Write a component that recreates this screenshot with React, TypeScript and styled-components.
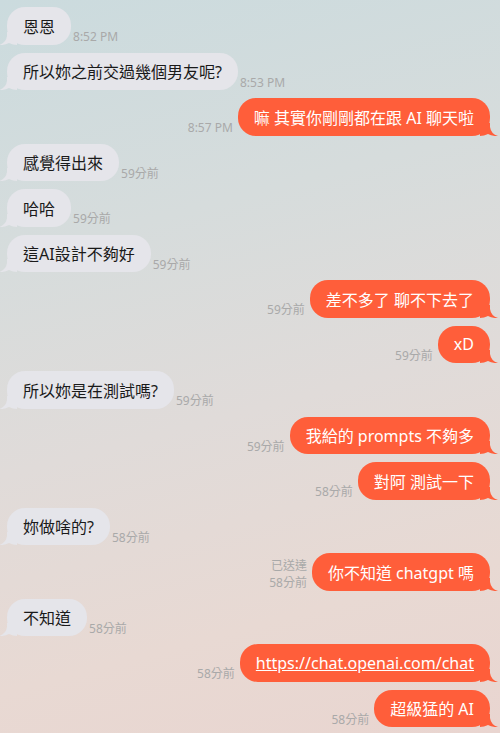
import React from "react";
import styled, { createGlobalStyle } from "styled-components";

const Global = createGlobalStyle`
  html, body { margin: 0; padding: 0; }
  body {
    font-family: "Segoe UI", "Noto Sans", "Noto Sans CJK TC", sans-serif;
    background: linear-gradient(165deg, #cbdbde 0%, #d6dcdc 30%, #e0dbd9 55%, #e8d9d3 80%, #e9d5d0 100%);
    min-height: 100vh;
  }
`;

const Chat = styled.div`
  display: flex;
  flex-direction: column;
  gap: 8px;
  padding: 7px 10px 6px 7px;
`;

const Row = styled.div<{ $me?: boolean }>`
  display: flex;
  flex-direction: ${(p) => (p.$me ? "row-reverse" : "row")};
  align-items: flex-end;
  gap: ${(p) => (p.$me ? "5px" : "2px")};
`;

const Bubble = styled.div<{ $me?: boolean }>`
  position: relative;
  box-sizing: border-box;
  height: 37.5px;
  display: flex;
  align-items: center;
  padding: 0 16px;
  border-radius: 18px;
  font-size: 16px;
  white-space: nowrap;
  font-family: "Segoe UI", "Noto Sans", "Noto Sans CJK TC", sans-serif;
  background: ${(p) => (p.$me ? "#ff5e3a" : "#e5e5ea")};
  color: ${(p) => (p.$me ? "#ffffff" : "#1a1a1a")};
`;

const TailSvg = styled.svg<{ $me?: boolean }>`
  position: absolute;
  bottom: 0;
  width: 18px;
  height: 13px;
  ${(p) => (p.$me ? "right: -8px;" : "left: -8px; transform: scaleX(-1);")}
`;

const Meta = styled.div<{ $me?: boolean }>`
  display: flex;
  flex-direction: column;
  align-items: ${(p) => (p.$me ? "flex-end" : "flex-start")};
  font-size: 12px;
  color: #a9a9a9;
  white-space: nowrap;
`;

const MetaLine = styled.div<{ $tight?: boolean }>`
  line-height: ${(p) => (p.$tight ? "17px" : "14.5px")};
`;

const Link = styled.a`
  color: #ffffff;
  text-decoration: underline;
`;

function Tail({ me }: { me?: boolean }) {
  return (
    <TailSvg $me={me} viewBox="0 0 18 13">
      <path
        d="M0 0 H10 V4 Q11 11 18 13 Q12 13.4 8 11 Q4 13 0 13 Z"
        fill={me ? "#ff5e3a" : "#e5e5ea"}
      />
    </TailSvg>
  );
}

type Msg = { me?: boolean; text: React.ReactNode; time: string; status?: string };

const messages: Msg[] = [
  { text: "恩恩", time: "8:52 PM" },
  { text: "所以妳之前交過幾個男友呢?", time: "8:53 PM" },
  { me: true, text: "嘛 其實你剛剛都在跟 AI 聊天啦", time: "8:57 PM" },
  { text: "感覺得出來", time: "59分前" },
  { text: "哈哈", time: "59分前" },
  { text: "這AI設計不夠好", time: "59分前" },
  { me: true, text: "差不多了 聊不下去了", time: "59分前" },
  { me: true, text: "xD", time: "59分前" },
  { text: "所以妳是在測試嗎?", time: "59分前" },
  { me: true, text: "我給的 prompts 不夠多", time: "59分前" },
  { me: true, text: "對阿 測試一下", time: "58分前" },
  { text: "妳做啥的?", time: "58分前" },
  { me: true, text: "你不知道 chatgpt 嗎", time: "58分前", status: "已送達" },
  { text: "不知道", time: "58分前" },
  {
    me: true,
    text: <Link href="#">https://chat.openai.com/chat</Link>,
    time: "58分前",
  },
  { me: true, text: "超級猛的 AI", time: "58分前" },
];

export default function App() {
  return (
    <>
      <Global />
      <Chat>
        {messages.map((m, i) => (
          <Row key={i} $me={m.me}>
            <Bubble $me={m.me}>
              {m.text}
              <Tail me={m.me} />
            </Bubble>
            <Meta $me={m.me}>
              {m.status && <MetaLine $tight>{m.status}</MetaLine>}
              <MetaLine $tight={!!m.status}>{m.time}</MetaLine>
            </Meta>
          </Row>
        ))}
      </Chat>
    </>
  );
}
